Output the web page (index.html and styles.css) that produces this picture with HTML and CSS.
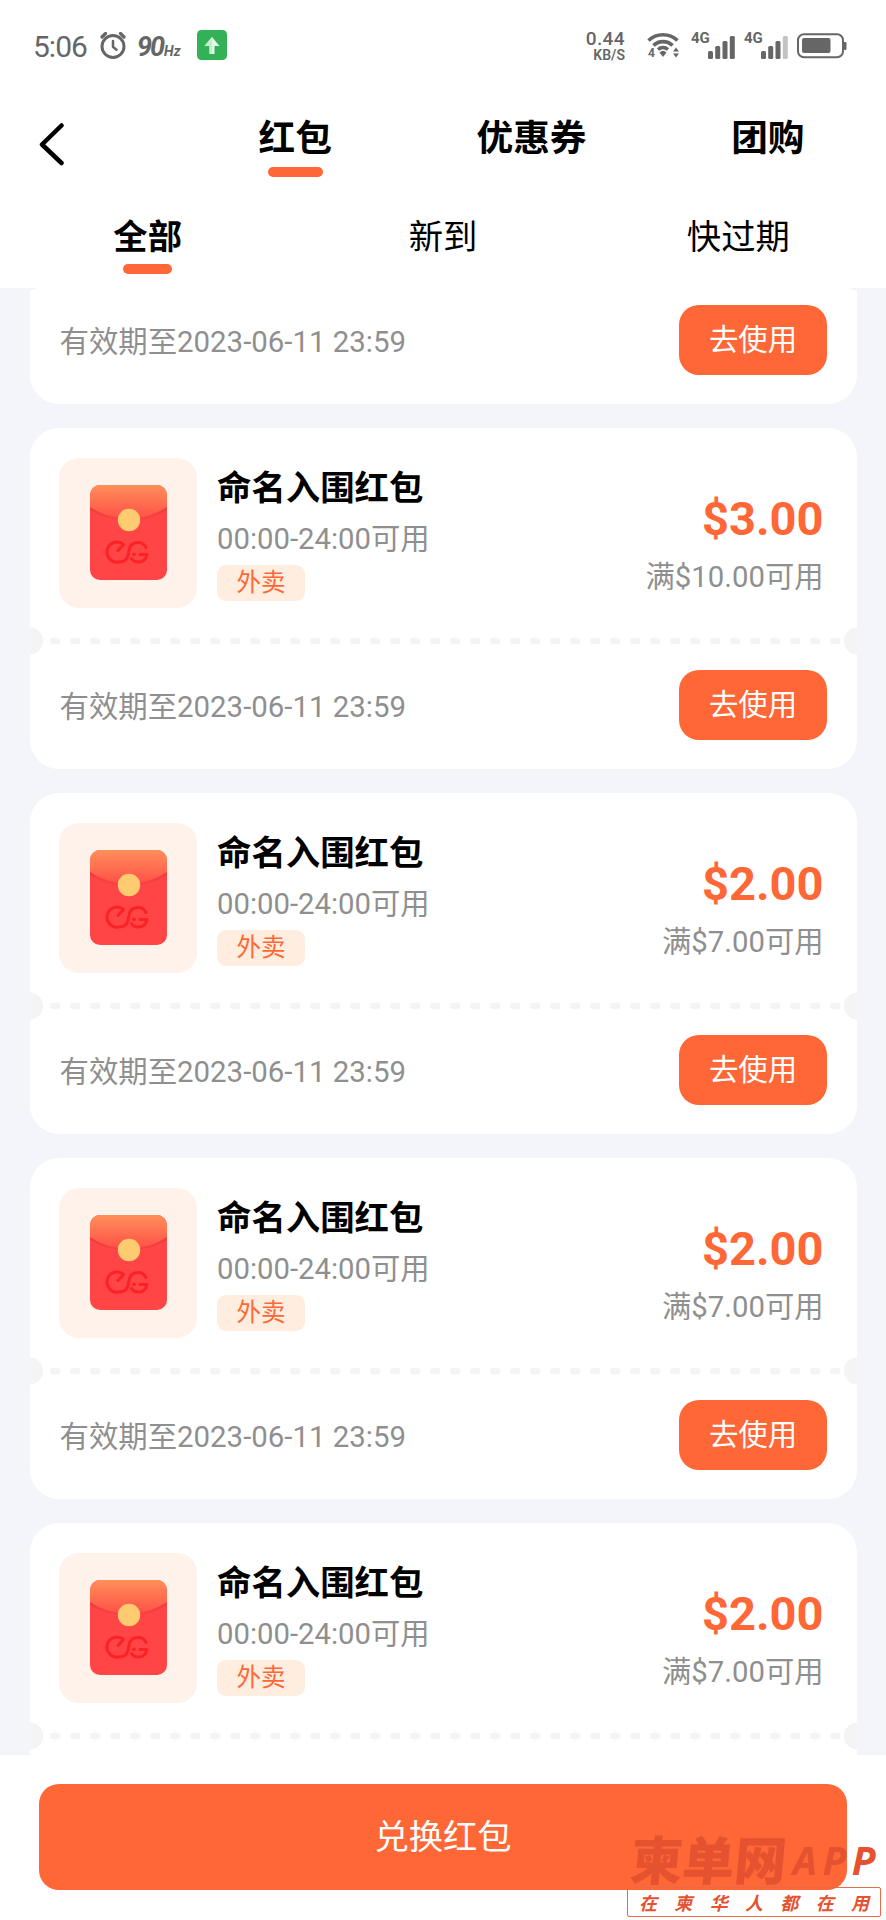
FILE: index.html
```html
<!DOCTYPE html>
<html lang="zh-CN">
<head>
<meta charset="utf-8">
<title>红包</title>
<link rel="stylesheet" href="styles.css">
</head>
<body>
<svg class="defs" width="0" height="0">
  <defs>
    <linearGradient id="flap" x1="0" y1="0" x2="0" y2="1"><stop offset="0" stop-color="#ff8f5a"/><stop offset="1" stop-color="#ff5147"/></linearGradient>
    <linearGradient id="shade" x1="0" y1="0" x2="0" y2="1"><stop offset="0" stop-color="#ee3a3c"/><stop offset="1" stop-color="#fc4343"/></linearGradient>
    <symbol id="packet" viewBox="0 0 77 95">
      <rect width="77" height="95" rx="10" fill="#ff4545"/>
      <path d="M0 22 L0 25 Q17 36 38.500 36 Q60 36 77 25 V22Z" fill="url(#shade)"/>
      <path d="M0 10 A10 10 0 0 1 10 0 H67 A10 10 0 0 1 77 10 V22 Q60 33.500 38.500 33.500 Q17 33.500 0 22Z" fill="url(#flap)"/>
      <circle cx="39" cy="35" r="11.200" fill="#ffcb70"/>
      <g fill="none" stroke="#fb2225" stroke-width="3" stroke-linecap="round" stroke-linejoin="round">
        <path d="M28 65.500 L33.500 59.500 A10 10 0 1 0 28.500 77 Q38 77 38.500 67.500 Q39.500 57.500 48 57.500 Q53.500 57.500 56 62.500"/>
        <path d="M50 69.500 H57 Q55.500 77 48.500 77 Q43.500 77 41.500 73.500"/>
      </g>
      <circle cx="44" cy="69.300" r="1.900" fill="#fb2225"/>
    </symbol>
    <symbol id="perforation" viewBox="0 0 827 28">
      <circle cx="-.5" cy="14" r="13.600"/><circle cx="827.500" cy="14" r="13.600"/>
      <path d="M23.200 14H810" fill="none" stroke="#f4f4f4" stroke-width="6.500" stroke-linecap="round" stroke-dasharray="4 16"/>
    </symbol>
    <symbol id="signal" viewBox="0 0 27 23">
      <rect x="0" y="15" width="5" height="8" rx="1.500"/><rect x="7.200" y="10" width="5" height="13" rx="1.500"/><rect x="14.500" y="5" width="5" height="18" rx="1.500"/>
    </symbol>
  </defs>
</svg>
<div class="screen">
  <header class="header">
    <div class="status">
      <span class="clock">5:06</span>
      <svg class="alarm" width="26" height="27" viewBox="0 0 26 27" fill="none" stroke="#666" stroke-linecap="round"><circle cx="13" cy="14.500" r="11" stroke-width="3"/><path d="M13 9v6l3.500 2.800" stroke-width="2.500"/><path d="M2 5l3.500-3.500M24 5l-3.500-3.500" stroke-width="3.200"/></svg>
      <span class="rate">90<small>Hz</small></span>
      <svg class="upload" width="30" height="30" viewBox="0 0 30 30"><rect width="30" height="30" rx="4.500" fill="#32b157"/><path d="M15 7l7.500 9H17.500v8h-5v-8H7.500z" fill="#e4f8e9"/><path d="M15 7v17h-2.500v-8H7.500z" fill="#c5ebce"/></svg>
      <div class="speed"><b>0.44</b><span>KB/S</span></div>
      <div class="wifi">
        <svg width="33" height="26" viewBox="0 0 33 26"><g fill="none" stroke="#666" stroke-width="3.600"><path d="M1.500 8.500a21 21 0 0 1 29 0"/><path d="M6.500 13.500a13.500 13.500 0 0 1 19 0"/><path d="M11 17.500a7.600 7.600 0 0 1 10 0"/></g><path d="M12.500 20.500q3.500-3.500 7 0L16 25z" fill="#666"/><path d="M26 19.500l3-4 3 4zM26 21.500h6l-3 4z" fill="#666"/></svg>
        <span>4</span>
      </div>
      <div class="cell"><b>4G</b><svg width="27" height="23" viewBox="0 0 27 23" fill="#666"><use href="#signal" width="27" height="23"/><rect x="21.800" width="5" height="23" rx="1.500"/></svg></div>
      <div class="cell second"><b>4G</b><svg width="27" height="23" viewBox="0 0 27 23" fill="#666"><use href="#signal" width="27" height="23"/><rect x="21.800" width="5" height="23" rx="1.500" fill="#c3c3c3"/></svg></div>
      <svg class="battery" width="50" height="26" viewBox="0 0 50 26"><rect x="1" y="1.200" width="45" height="23" rx="6" fill="none" stroke="#666" stroke-width="2"/><rect x="5" y="5" width="28.500" height="15" rx="2" fill="#666"/><rect x="46.500" y="9" width="3" height="8" rx="1" fill="#666"/></svg>
    </div>
    <nav class="tabs">
      <svg class="back" width="26" height="46" viewBox="0 0 26 46"><path d="M22.500 4.500L3 23.500l19.500 18.500" fill="none" stroke="#000" stroke-width="4.500" stroke-linecap="round" stroke-linejoin="round"/></svg>
      <span class="tab active">红包</span><span class="tab">优惠券</span><span class="tab">团购</span>
    </nav>
    <nav class="filters"><span class="filter active">全部</span><span class="filter">新到</span><span class="filter">快过期</span></nav>
  </header>

  <main class="list">
    <article class="card partial">
      <svg class="tear" width="827" height="28" fill="#f4f4f4"><use href="#perforation"/></svg>
      <div class="foot"><span class="expiry">有效期至2023-06-11 23:59</span><span class="use">去使用</span></div>
    </article>
    <article class="card">
      <div class="top">
        <div class="thumb"><svg width="77" height="95"><use href="#packet"/></svg></div>
        <div class="info"><h2>命名入围红包</h2><p>00:00-24:00可用</p><span class="tag">外卖</span></div>
        <div class="amount"><strong>$3.00</strong><span>满$10.00可用</span></div>
      </div>
      <svg class="tear" width="827" height="28" fill="#f4f4f4"><use href="#perforation"/></svg>
      <div class="foot"><span class="expiry">有效期至2023-06-11 23:59</span><span class="use">去使用</span></div>
    </article>
    <article class="card">
      <div class="top">
        <div class="thumb"><svg width="77" height="95"><use href="#packet"/></svg></div>
        <div class="info"><h2>命名入围红包</h2><p>00:00-24:00可用</p><span class="tag">外卖</span></div>
        <div class="amount"><strong>$2.00</strong><span>满$7.00可用</span></div>
      </div>
      <svg class="tear" width="827" height="28" fill="#f4f4f4"><use href="#perforation"/></svg>
      <div class="foot"><span class="expiry">有效期至2023-06-11 23:59</span><span class="use">去使用</span></div>
    </article>
    <article class="card">
      <div class="top">
        <div class="thumb"><svg width="77" height="95"><use href="#packet"/></svg></div>
        <div class="info"><h2>命名入围红包</h2><p>00:00-24:00可用</p><span class="tag">外卖</span></div>
        <div class="amount"><strong>$2.00</strong><span>满$7.00可用</span></div>
      </div>
      <svg class="tear" width="827" height="28" fill="#f4f4f4"><use href="#perforation"/></svg>
      <div class="foot"><span class="expiry">有效期至2023-06-11 23:59</span><span class="use">去使用</span></div>
    </article>
    <article class="card">
      <div class="top">
        <div class="thumb"><svg width="77" height="95"><use href="#packet"/></svg></div>
        <div class="info"><h2>命名入围红包</h2><p>00:00-24:00可用</p><span class="tag">外卖</span></div>
        <div class="amount"><strong>$2.00</strong><span>满$7.00可用</span></div>
      </div>
      <svg class="tear" width="827" height="28" fill="#f4f4f4"><use href="#perforation"/></svg>
    </article>
  </main>

  <footer class="bottom"><div class="redeem">兑换红包</div></footer>

  <div class="watermark">
    <div class="mark"><span class="brand">柬单网</span><span class="app">APP</span></div>
    <div class="slogan"><i>在</i><i>柬</i><i>华</i><i>人</i><i>都</i><i>在</i><i>用</i></div>
  </div>
</div>
</body>
</html>
```

FILE: styles.css
```css
* { box-sizing: border-box; }
body { margin: 0; font-family: Roboto, "Noto Sans CJK SC", sans-serif; color: #000; background: #fff; }
h2, p { margin: 0; }
.defs { display: block; position: absolute; }
.screen { position: relative; width: 886px; height: 1920px; overflow: hidden; display: flex; flex-direction: column; }

.header { height: 288px; flex: none; background: #fff; }
.status { height: 94px; display: flex; align-items: flex-start; padding-left: 33px; color: #666; }
.clock { font-size: 30px; line-height: 36px; margin-top: 29px; width: 67px; letter-spacing: -1px; white-space: nowrap; }
.alarm { margin-top: 32px; }
.rate { width: 60px; margin: 31px 0 0 11px; font: italic 700 27px/32px Roboto, sans-serif; letter-spacing: -2px; white-space: nowrap; }
.rate small { font-size: 14px; letter-spacing: 0; margin-left: 1px; }
.upload { margin-top: 30px; }
.speed { margin: 30px 0 0 357px; width: 41px; display: flex; flex-direction: column; align-items: flex-end; font-size: 14px; line-height: 14px; }
.speed b { font-size: 19px; line-height: 18px; font-weight: 500; letter-spacing: .4px; }
.speed span { font-weight: 600; }
.wifi { position: relative; width: 33px; height: 26px; margin: 32px 0 0 22px; }
.wifi svg { display: block; }
.wifi span { position: absolute; left: 1px; top: 14px; font: 700 12px/14px Roboto, sans-serif; }
.cell { display: flex; margin: 31px 0 0 11px; width: 45px; font-size: 15px; line-height: 15px; }
.cell b { width: 17px; }
.cell svg { margin-top: 5px; flex: none; }
.cell.second { margin-left: 8px; }
.battery { margin: 32.500px 0 0 8px; }

.tabs { height: 100px; display: flex; position: relative; padding-left: 177px; }
.back { position: absolute; left: 39px; top: 27px; }
.tab, .filter { flex: 1; display: flex; flex-direction: column; align-items: center; }
.tab { font-size: 36.700px; line-height: 54px; padding-top: 18px; font-weight: 700; }
.tab.active::after { content: ""; width: 55px; height: 10px; margin-top: 1px; border-radius: 5px; background: #ff6737; }
.filters { display: flex; height: 94px; }
.filter { font-size: 34.300px; line-height: 50px; padding-top: 18px; }
.filter.active { font-weight: 700; }
.filter.active::after { content: ""; width: 49px; height: 10px; margin-top: 2px; border-radius: 5px; background: #ff6737; }

.list { height: 1467px; flex: none; overflow: hidden; background: #f4f5fa; padding: 0 29.500px; display: flex; flex-direction: column; gap: 24.400px; }
.card { height: 340.600px; flex: none; background: #fff; border-radius: 29px; overflow: hidden; }
.card.partial { height: 115.600px; border-radius: 0 0 29px 29px; }
.card.partial .tear { margin-top: -25.500px; }
.top { height: 213.500px; display: flex; padding: 30px 33px 0 29.500px; }
.thumb { width: 138px; height: 150px; border-radius: 20px; background: #fff2ea; display: flex; align-items: center; justify-content: center; }
.info { margin-left: 20px; flex: 1; display: flex; flex-direction: column; align-items: flex-start; }
.info h2 { font-size: 34.400px; line-height: 50px; margin-top: 5px; font-weight: 700; }
.info p { font-size: 29.300px; line-height: 44px; margin-top: 4px; color: #8f8f8f; }
.tag { width: 88px; height: 36px; margin-top: 4px; border-radius: 9px; background: #ffeee0; color: #ff6737; font-size: 24.500px; line-height: 35px; text-align: center; }
.amount { display: flex; flex-direction: column; align-items: flex-end; color: #8f8f8f; font-size: 29.300px; line-height: 44px; }
.amount strong { color: #ff6737; font-size: 47px; line-height: 56px; margin-top: 33px; }
.amount span { margin-top: 8px; }
.tear { display: block; margin: -14px 0; }
.foot { height: 127.100px; display: flex; align-items: center; justify-content: space-between; padding: 0 29.500px 0 30px; color: #8f8f8f; font-size: 29.400px; }
.expiry { padding-bottom: 3px; }
.use { width: 148px; height: 70px; border-radius: 20px; background: #ff6737; color: #fff; text-align: center; line-height: 70px; }

.bottom { flex: 1; background: #fff; padding: 29px 39px 0; }
.redeem { height: 106px; border-radius: 20px; background: #ff6737; color: #fff; font-size: 34.300px; line-height: 107px; text-align: center; }

.watermark { position: absolute; left: 627px; top: 1829px; width: 254px; color: #e45230; }
.mark { height: 58px; display: flex; align-items: flex-start; padding-left: 4px; white-space: nowrap; }
.brand { font: 900 52px/58px "Noto Sans CJK SC", sans-serif; transform: skewX(-5deg); width: 158px; }
.app { font: italic 700 39px/46px "Noto Sans", sans-serif; margin: 8px 0 0 4px; letter-spacing: 5.500px; }
.slogan { height: 30px; border: 1.500px solid #e9694b; border-radius: 2px; display: flex; justify-content: space-between; padding: 0 11px; font: 700 18px/28px "Noto Sans CJK SC", sans-serif; }
```
